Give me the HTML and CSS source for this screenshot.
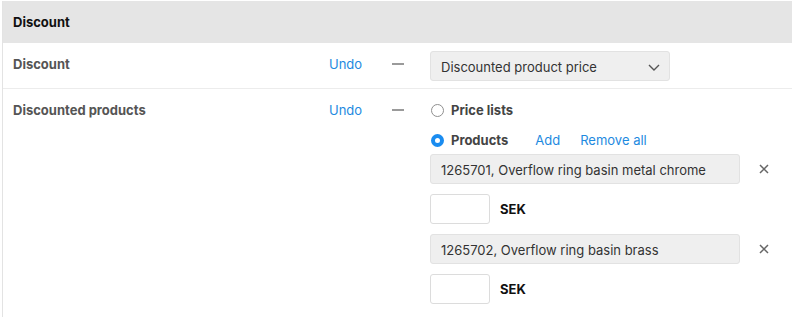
FILE: index.html
```html
<!DOCTYPE html>
<html lang="en">
  <head>
    <meta charset="UTF-8" />
    <meta name="viewport" content="width=device-width, initial-scale=1.0" />
    <link rel="stylesheet" href="styles.css">
  </head>
  <body>
    <div class="panel">
      <div class="panel-head">Discount</div>

      <!-- Discount type -->
      <div class="row">
        <div class="label">Discount</div>
        <a class="undo">Undo</a>
        <div class="dash-cell"><span class="dash"></span></div>
        <div class="control">
          <div class="select">
            <span>Discounted product price</span>
            <svg class="chevron" width="12" height="7" viewBox="0 0 12 7">
              <path d="M1 1 L6 6 L11 1" fill="none" stroke="#555" stroke-width="1.4" />
            </svg>
          </div>
        </div>
      </div>

      <!-- Discounted products -->
      <div class="row">
        <div class="label">Discounted products</div>
        <a class="undo">Undo</a>
        <div class="dash-cell"><span class="dash"></span></div>
        <div class="control">
          <div class="option">
            <span class="radio"></span>
            <span class="option-text">Price lists</span>
          </div>
          <div class="option">
            <span class="radio checked"></span>
            <span class="option-text">Products</span>
            <a class="link add">Add</a>
            <a class="link remove">Remove all</a>
          </div>

          <div class="products">
            <div class="product">
              <div class="product-name">1265701, Overflow ring basin metal chrome</div>
              <svg class="close" width="10" height="10" viewBox="0 0 10 10">
                <path d="M1 1 L9 9 M9 1 L1 9" stroke="#666" stroke-width="1.5" />
              </svg>
            </div>
            <div class="price">
              <input class="price-input" type="text" />
              <span class="currency">SEK</span>
            </div>

            <div class="product">
              <div class="product-name">1265702, Overflow ring basin brass</div>
              <svg class="close" width="10" height="10" viewBox="0 0 10 10">
                <path d="M1 1 L9 9 M9 1 L1 9" stroke="#666" stroke-width="1.5" />
              </svg>
            </div>
            <div class="price">
              <input class="price-input" type="text" />
              <span class="currency">SEK</span>
            </div>
          </div>
        </div>
      </div>
    </div>
  </body>
</html>
```

FILE: styles.css
```css
body {
  margin: 0;
  background-color: white;
  font-family: Inter, "Liberation Sans", sans-serif;
  font-size: 13px;
  color: #333;
}

.panel {
  margin: 1px 0 0 2px;
  border-left: 1px solid #e3e3e3;
  min-height: 316px;
}

.panel-head {
  height: 42px;
  display: flex;
  align-items: center;
  padding-left: 10px;
  background-color: #e5e5e5;
  font-weight: 700;
  color: #111;
}

.row {
  display: flex;
  align-items: flex-start;
  padding: 8px 0 7px 10px;
  border-bottom: 1px solid #ececec;
}

.row:last-child {
  border-bottom: none;
}

.label {
  width: 316px;
  line-height: 26px;
  font-weight: 700;
  color: #555;
}

.undo {
  width: 63px;
  line-height: 26px;
  color: #1e8ae0;
}

.dash-cell {
  width: 38px;
  height: 26px;
  display: flex;
  align-items: center;
}

.dash {
  display: block;
  width: 12px;
  height: 2px;
  margin-top: -1px;
  background-color: #9a9a9a;
}

.control {
  display: flex;
  flex-direction: column;
}

.select {
  box-sizing: border-box;
  width: 240px;
  height: 30px;
  display: flex;
  align-items: center;
  justify-content: space-between;
  padding: 1px 9px 0 10px;
  background-color: #efefef;
  border: 1px solid #e2e2e2;
  border-radius: 3px;
  color: #333;
}

.chevron {
  margin-top: 1px;
}

.option {
  display: flex;
  align-items: center;
  height: 26px;
  margin-bottom: 4px;
}

.radio {
  width: 11px;
  height: 11px;
  border: 1px solid #8f8f8f;
  border-radius: 50%;
  margin-right: 7px;
  margin-left: 1px;
}

.radio.checked {
  width: 5px;
  height: 5px;
  border: 4px solid #1a8cf0;
  background-color: white;
}

.option-text {
  font-weight: 700;
  color: #444;
}

.link {
  color: #1e8ae0;
}

.add {
  margin-left: 27px;
}

.remove {
  margin-left: 20px;
}

.products {
  margin-top: -3px;
  display: flex;
  flex-direction: column;
  gap: 10px;
}

.product {
  display: flex;
  align-items: center;
}

.product-name {
  box-sizing: border-box;
  width: 310px;
  height: 30px;
  display: flex;
  align-items: center;
  padding: 1px 0 0 10px;
  background-color: #efefef;
  border: 1px solid #e2e2e2;
  border-radius: 3px;
  color: #333;
}

.close {
  margin-left: 19px;
}

.price {
  display: flex;
  align-items: center;
}

.price-input {
  width: 60px;
  height: 30px;
  box-sizing: border-box;
  margin: 0;
  border: 1px solid #dcdcdc;
  border-radius: 3px;
  background-color: white;
}

.currency {
  margin-left: 10px;
  font-weight: 700;
  color: #111;
}
```
